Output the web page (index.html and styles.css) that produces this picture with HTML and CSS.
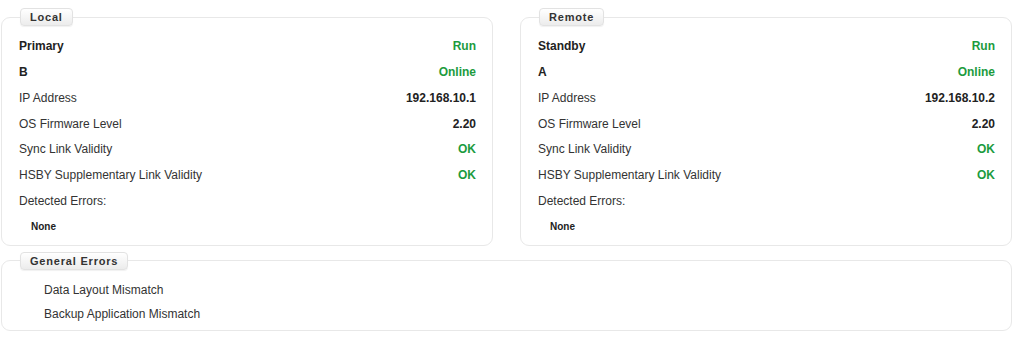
FILE: index.html
```html
<!DOCTYPE html>
<html lang="en">
  <head>
    <meta charset="utf-8" />
    <title>HSBY Status</title>
    <link rel="stylesheet" href="styles.css">
  </head>
  <body>
    <div class="page">
      <div class="panels">
        <fieldset class="panel">
          <legend class="tab">Local</legend>
          <div class="rows">
            <div class="row head"><span>Primary</span><span class="ok">Run</span></div>
            <div class="row head"><span>B</span><span class="ok">Online</span></div>
            <div class="row"><span>IP Address</span><span class="val">192.168.10.1</span></div>
            <div class="row"><span>OS Firmware Level</span><span class="val">2.20</span></div>
            <div class="row"><span>Sync Link Validity</span><span class="ok">OK</span></div>
            <div class="row"><span>HSBY Supplementary Link Validity</span><span class="ok">OK</span></div>
            <div class="row"><span>Detected Errors:</span></div>
            <div class="row none"><span>None</span></div>
          </div>
        </fieldset>
        <fieldset class="panel">
          <legend class="tab">Remote</legend>
          <div class="rows">
            <div class="row head"><span>Standby</span><span class="ok">Run</span></div>
            <div class="row head"><span>A</span><span class="ok">Online</span></div>
            <div class="row"><span>IP Address</span><span class="val">192.168.10.2</span></div>
            <div class="row"><span>OS Firmware Level</span><span class="val">2.20</span></div>
            <div class="row"><span>Sync Link Validity</span><span class="ok">OK</span></div>
            <div class="row"><span>HSBY Supplementary Link Validity</span><span class="ok">OK</span></div>
            <div class="row"><span>Detected Errors:</span></div>
            <div class="row none"><span>None</span></div>
          </div>
        </fieldset>
      </div>
      <fieldset class="panel general">
        <legend class="tab">General Errors</legend>
        <ul class="errors">
          <li>Data Layout Mismatch</li>
          <li>Backup Application Mismatch</li>
        </ul>
      </fieldset>
    </div>
  </body>
</html>
```

FILE: styles.css
```css
html {
  background: #fff;
}
body {
  margin: 0;
  font-family: "Liberation Sans", Arial, sans-serif;
  font-size: 12px;
  color: #333;
}

.page {
  width: 1012px;
  padding: 8px 0 0 1px;
  box-sizing: border-box;
}

.panels {
  display: flex;
  gap: 27px;
  margin-bottom: 6px;
}

.panel {
  margin: 0;
  flex: 1;
  border: 1px solid #e8e8e8;
  border-radius: 9px;
  padding: 7px 16px 5px 17px;
  min-width: 0;
}

.tab {
  margin-left: 1px;
  padding: 0 9px;
  height: 16px;
  line-height: 16px;
  font-size: 11px;
  font-weight: bold;
  letter-spacing: 0.8px;
  color: #333;
  background: linear-gradient(#fff, #ececec);
  border: 1px solid #e2e2e2;
  border-radius: 4px;
  box-shadow: 0 1px 1px rgba(0, 0, 0, 0.06);
}

.rows {
  display: grid;
  grid-auto-rows: 25.86px;
}

.row {
  display: flex;
  align-items: center;
  justify-content: space-between;
}

.head {
  font-weight: bold;
  color: #222;
}

.val {
  font-weight: bold;
  color: #222;
}

.ok {
  font-weight: bold;
  color: #1c9b3e;
}

.none {
  padding-left: 12px;
  font-size: 10px;
  font-weight: bold;
  color: #222;
}

.general {
  padding: 8px 16px 4px 17px;
}

.errors {
  list-style: none;
  margin: 0;
  padding: 0 0 0 25px;
}
.errors li {
  height: 24px;
  line-height: 24px;
}
```
